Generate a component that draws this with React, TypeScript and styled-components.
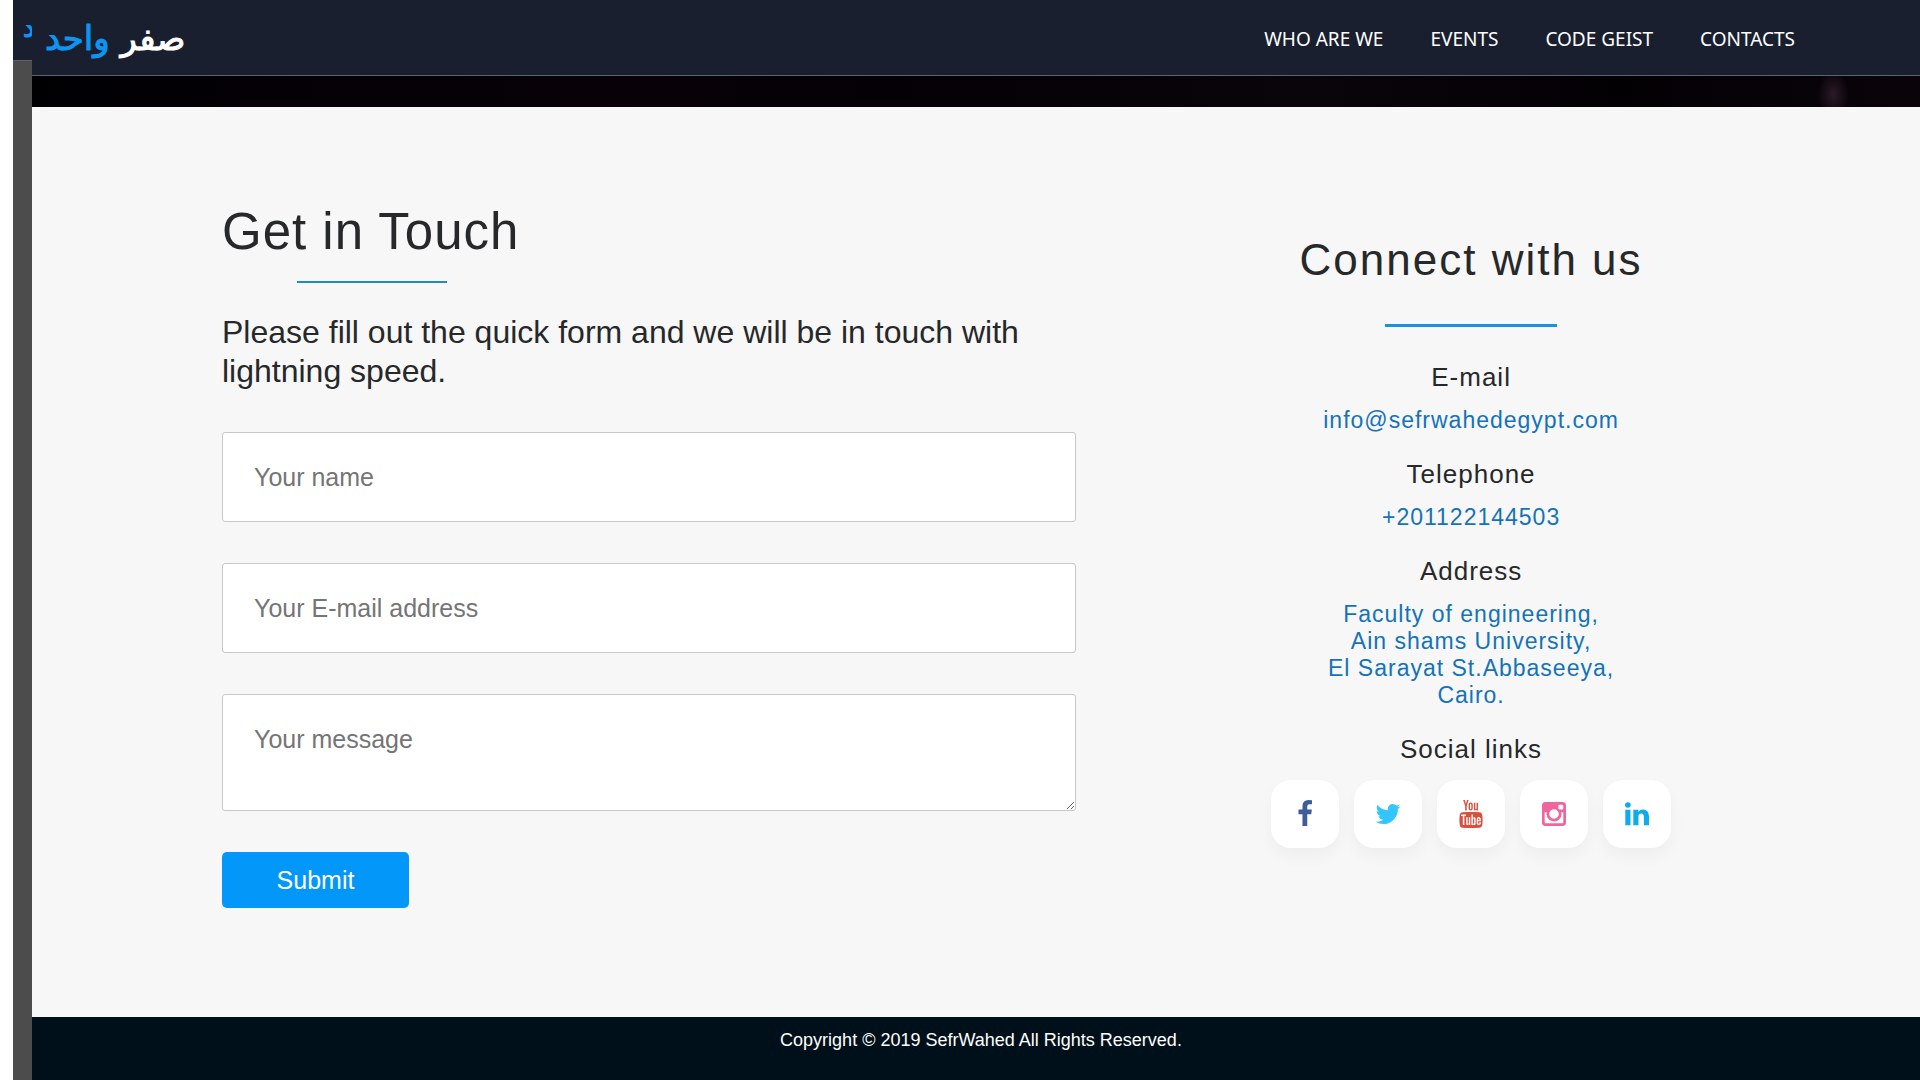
import React from 'react';
import styled, { createGlobalStyle } from 'styled-components';
import { TfiYoutube } from 'react-icons/tfi';

const GlobalStyle = createGlobalStyle`
  *, *::before, *::after { box-sizing: border-box; }
  body {
    margin: 0;
    background: #fff;
    color: #26282a;
    font-family: "Liberation Sans", Arial, sans-serif;
  }
  h1, h2, h3, p { margin: 0; font-weight: 400; }
`;

const Page = styled.div`
  display: flex;
  min-height: 100vh;
  padding-left: 13px;
`;

const Strip = styled.aside`
  flex: 0 0 19px;
  min-width: 0;
  background: #4c4c4c;
`;

const StripHead = styled.div`
  height: 61px;
  padding: 10px 0 0 10px;
  overflow: hidden;
  background: #1a1f30;
  border-bottom: 1px solid #5b616d;
  color: #0c96f3;
  font: 26px/36px "DejaVu Sans", sans-serif;
  -webkit-text-stroke: 1px currentColor;
`;

const Main = styled.div`
  flex: 1;
  min-width: 0;
  display: flex;
  flex-direction: column;
`;

const Header = styled.header`
  display: flex;
  align-items: center;
  justify-content: space-between;
  height: 76px;
  padding: 0 125px 0 13px;
  background: #1a1f30;
  border-bottom: 1px solid #5b616d;
`;

const Logo = styled.a`
  color: #fff;
  font: 34px/72px "DejaVu Sans", sans-serif;
  -webkit-text-stroke: 1px currentColor;
  text-decoration: none;
`;

const LogoAccent = styled.span`
  color: #0c96f3;
`;

const Nav = styled.nav`
  display: flex;
  gap: 47px;
  padding-top: 2px;
`;

const NavLink = styled.a`
  color: #fff;
  font: 19px/28px "Noto Sans", sans-serif;
  text-decoration: none;
`;

const Banner = styled.div`
  height: 31px;
  background:
    radial-gradient(16px 24px at 95.4% 60%, #2a1a28, transparent),
    linear-gradient(90deg, #000003, #040005 12%, #080208 33%, #040005 45%, #0a040b 68%, #030004 84%, #0a040a);
`;

const Contact = styled.section`
  display: grid;
  grid-template-columns: 8fr 5fr;
  column-gap: 128px;
  padding: 95px 182px 109px 190px;
  background: #f7f7f7;
`;

const Title = styled.h1`
  font-size: 51px;
  line-height: 60px;
  letter-spacing: 1px;
`;

const TitleRule = styled.div`
  width: 150px;
  height: 2px;
  margin: 19px 0 30px 75px;
  background: #2489c9;
`;

const Intro = styled.p`
  margin-bottom: 41px;
  font-size: 32px;
  line-height: 39px;
`;

const Form = styled.form`
  display: flex;
  flex-direction: column;
  align-items: flex-start;
  gap: 41px;
`;

const Input = styled.input`
  width: 100%;
  height: 90px;
  padding: 29px 31px;
  border: 1px solid #c8c8c8;
  border-radius: 3px;
  background: #fff;
  color: #26282a;
  font: 25px/30px "Liberation Sans", Arial, sans-serif;
  &::placeholder { color: #757575; }
`;

const TextArea = styled(Input)`
  height: 117px;
  resize: vertical;
`;

const Submit = styled.button`
  width: 187px;
  height: 56px;
  border: 0;
  border-radius: 5px;
  background: #0297f9;
  color: #fff;
  font: 25px/30px "Liberation Sans", Arial, sans-serif;
  cursor: pointer;
`;

const Connect = styled.div`
  display: flex;
  flex-direction: column;
  align-items: center;
  padding-top: 30px;
  text-align: center;
`;

const ConnectTitle = styled.h2`
  font-size: 44px;
  line-height: 56px;
  letter-spacing: 2px;
`;

const ConnectRule = styled.div`
  width: 172px;
  height: 3px;
  margin: 36px 0 35px;
  background: #1a91dc;
`;

const Label = styled.h3`
  margin-bottom: 15px;
  font-size: 26px;
  line-height: 30px;
  letter-spacing: 1px;
`;

const Value = styled.p`
  margin-bottom: 25px;
  color: #1473b8;
  font-size: 23px;
  line-height: 27px;
  letter-spacing: 1px;
`;

const ValueLink = styled.a`
  color: inherit;
  text-decoration: none;
`;

const Socials = styled.div`
  display: flex;
  gap: 15px;
  padding-top: 1px;
`;

const Social = styled.a<{ $color: string }>`
  display: flex;
  align-items: center;
  justify-content: center;
  width: 68px;
  height: 68px;
  border-radius: 20px;
  background: #fff;
  box-shadow: 0 8px 16px rgba(0, 0, 0, 0.04);
  color: ${(p) => p.$color};
`;

const Footer = styled.footer`
  flex: 1;
  padding: 13px 0 29px 10px;
  background: #00101a;
  color: #fff;
  font-size: 18px;
  line-height: 21px;
  text-align: center;
`;

const Glyph = ({ d }: { d: string }) => (
  <svg width="28" height="28" viewBox="0 0 1792 1792" fill="currentColor" aria-hidden="true">
    <path d={d} />
  </svg>
);

const icons = {
  facebook:
    'M1343 12v264h-157q-86 0-116 36t-30 108v189h293l-39 296h-254v759h-306v-759h-255v-296h255v-218q0-186 104-288.500t277-102.500q147 0 228 12z',
  twitter:
    'M1684 408q-67 98-162 167 1 14 1 42 0 130-38 259.500t-115.500 248.500-184.500 210.500-258 146-323 54.500q-271 0-496-145 35 4 78 4 225 0 401-138-105-2-188-64.500t-114-159.500q33 5 61 5 43 0 85-11-112-23-185.500-111.500t-73.500-205.500v-4q68 38 146 41-66-44-105-115t-39-154q0-88 44-163 121 149 294.500 238.500t371.500 99.500q-8-38-8-74 0-134 94.500-228.500t228.500-94.500q140 0 236 102 109-21 205-78-37 115-142 178 93-10 186-50z',
  instagram:
    'M1490 1426v-648h-135q20 63 20 131 0 126-64 232.500t-174 168.500-240 62q-197 0-337-135.500t-140-327.500q0-68 20-131h-141v648q0 26 17.500 43.500t43.500 17.500h1069q25 0 43-17.500t18-43.500zm-284-533q0-124-90.500-211.500t-218.500-87.500q-127 0-217.500 87.500t-90.500 211.500 90.500 211.500 217.500 87.500q128 0 218.500-87.500t90.500-211.500zm284-360v-165q0-28-20-48.500t-49-20.500h-174q-29 0-49 20.500t-20 48.500v165q0 29 20 49t49 20h174q29 0 49-20t20-49zm174-208v1142q0 81-58 139t-139 58h-1142q-81 0-139-58t-58-139v-1142q0-81 58-139t139-58h1142q81 0 139 58t58 139z',
  linkedin:
    'M477 625v991h-330v-991h330zm21-306q1 73-50.500 122t-135.500 49h-2q-82 0-132-49t-50-122q0-74 51.500-122.500t134.500-48.500 133 48.500 51 122.500zm1166 729v568h-329v-530q0-105-40.500-164.500t-126.500-59.500q-63 0-105.500 34.500t-63.500 85.500q-11 30-11 81v553h-329q2-399 2-647t-1-296l-1-48h329v144h-2q20-32 41-56t56.500-52 87-43.500 114.500-15.500q171 0 275 113.500t104 332.500z',
};

const navItems = ['WHO ARE WE', 'EVENTS', 'CODE GEIST', 'CONTACTS'];

export default function App() {
  return (
    <>
      <GlobalStyle />
      <Page>
        <Strip aria-hidden="true">
          <StripHead>د</StripHead>
        </Strip>
        <Main>
          <Header>
            <Logo href="#" dir="rtl" lang="ar">
              صفر <LogoAccent>واحد</LogoAccent>
            </Logo>
            <Nav>
              {navItems.map((item) => (
                <NavLink key={item} href="#">
                  {item}
                </NavLink>
              ))}
            </Nav>
          </Header>
          <Banner />
          <Contact>
            <div>
              <Title>Get in Touch</Title>
              <TitleRule />
              <Intro>Please fill out the quick form and we will be in touch with lightning speed.</Intro>
              <Form onSubmit={(e) => e.preventDefault()}>
                <Input type="text" aria-label="Your name" placeholder="Your name" />
                <Input type="email" aria-label="Your E-mail address" placeholder="Your E-mail address" />
                <TextArea as="textarea" aria-label="Your message" placeholder="Your message" />
                <Submit type="submit">Submit</Submit>
              </Form>
            </div>
            <Connect>
              <ConnectTitle>Connect with us</ConnectTitle>
              <ConnectRule />
              <Label>E-mail</Label>
              <Value>
                <ValueLink href="mailto:info@sefrwahedegypt.com">info@sefrwahedegypt.com</ValueLink>
              </Value>
              <Label>Telephone</Label>
              <Value>
                <ValueLink href="tel:+201122144503">+201122144503</ValueLink>
              </Value>
              <Label>Address</Label>
              <Value>
                Faculty of engineering,
                <br />
                Ain shams University,
                <br />
                El Sarayat St.Abbaseeya,
                <br />
                Cairo.
              </Value>
              <Label>Social links</Label>
              <Socials>
                <Social href="#" $color="#3f5c9a" aria-label="Facebook">
                  <Glyph d={icons.facebook} />
                </Social>
                <Social href="#" $color="#33c5fd" aria-label="Twitter">
                  <Glyph d={icons.twitter} />
                </Social>
                <Social href="#" $color="#d9503f" aria-label="YouTube">
                  <TfiYoutube size={28} />
                </Social>
                <Social href="#" $color="#f0659b" aria-label="Instagram">
                  <Glyph d={icons.instagram} />
                </Social>
                <Social href="#" $color="#0fabee" aria-label="LinkedIn">
                  <Glyph d={icons.linkedin} />
                </Social>
              </Socials>
            </Connect>
          </Contact>
          <Footer>Copyright © 2019 SefrWahed All Rights Reserved.</Footer>
        </Main>
      </Page>
    </>
  );
}
